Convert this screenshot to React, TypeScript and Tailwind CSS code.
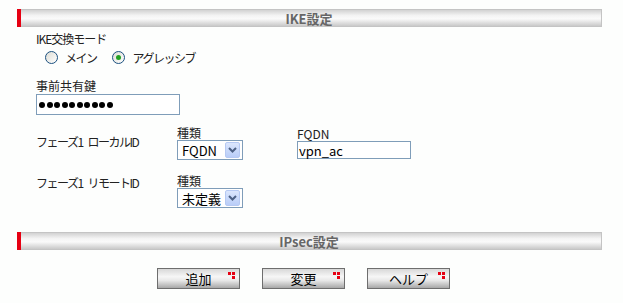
import React from "react"

const jp = "font-['Noto_Sans_CJK_JP','Noto_Sans',sans-serif]"

function SectionBar({ title }: { title: string }) {
    return (
        <div className="flex h-[18px] w-[585px] border border-[#c4c4c4] bg-[linear-gradient(to_bottom,#d2d2d2,#f4f4f4_35%,#fafafa_55%,#c9c9c9)]">
            <div className="w-[4px] -my-px -ml-px bg-[#e60012]" />
            <div className="flex-1 flex items-center justify-center text-[13px] font-bold leading-none text-[#666] pr-[4px]">
                {title}
            </div>
        </div>
    )
}

function Radio({ checked }: { checked?: boolean }) {
    return (
        <span className="flex h-[13px] w-[13px] items-center justify-center rounded-full border border-[#1c5180] bg-[linear-gradient(135deg,#dcdcd4,#ffffff)]">
            {checked && <span className="h-[5px] w-[5px] rounded-full bg-[#21a121]" />}
        </span>
    )
}

function Select({ value }: { value: string }) {
    return (
        <div className="flex h-[20px] w-[66px] items-center border border-[#7f9db9] bg-white pl-[4px] pr-[2px]">
            <span className="flex-1 text-[13px] leading-none text-black">{value}</span>
            <span className="flex h-[16px] w-[15px] items-center justify-center rounded-[2px] border border-[#b6c9f3] bg-[linear-gradient(to_bottom,#dbe6fd,#b9cdf8)]">
                <svg width="9" height="6" viewBox="0 0 9 6">
                    <path d="M1 1 L4.5 4.5 L8 1" fill="none" stroke="#4d6185" strokeWidth="2" />
                </svg>
            </span>
        </div>
    )
}

function Button({ label }: { label: string }) {
    return (
        <div className="relative flex h-[21px] w-[83px] items-center justify-center border border-[#6e6e6e] bg-[linear-gradient(to_bottom,#d8d8d8,#f6f6f6_40%,#e8e8e8_60%,#a8a8a8)] text-[13px] leading-none text-black">
            {label}
            <svg className="absolute right-[3px] top-[3px]" width="8" height="8" viewBox="0 0 8 8">
                <rect x="0" y="0" width="3" height="3" fill="#e60012" />
                <rect x="4" y="0" width="3" height="3" fill="#e60012" />
                <rect x="4" y="4" width="3" height="3" fill="#e60012" />
            </svg>
        </div>
    )
}

function PhaseLabel({ name, className }: { name: string; className: string }) {
    return (
        <div className={`flex w-[141px] text-[12px] leading-[14px] tracking-[-1.5px] ${className}`}>
            <span>フェーズ1</span>
            <span className="ml-[5px]">{name}</span>
        </div>
    )
}

export default function App() {
    return (
        <div className={`${jp} h-[303px] w-[623px] bg-[#fdfefd] pl-[17px] pt-[9px] text-[#222]`}>
            <SectionBar title="IKE設定" />

            <div className="pl-[19px]">
                {/* IKE exchange mode */}
                <div className="mt-[5px] text-[12px] leading-[14px] tracking-[-1px]">IKE交換モード</div>
                <div className="mt-[5px] flex items-center pl-[9px] text-[12px] leading-none tracking-[-1.5px]">
                    <Radio />
                    <span className="ml-[7px]">メイン</span>
                    <span className="ml-[15px]"><Radio checked /></span>
                    <span className="ml-[8px]">アグレッシブ</span>
                </div>

                {/* Pre-shared key */}
                <div className="mt-[14px] text-[12px] leading-[16px]">事前共有鍵</div>
                <div className="flex h-[21px] w-[144px] items-center gap-[1.5px] border border-[#7f9db9] bg-white pl-[2px]">
                    {Array.from({ length: 10 }).map((_, i) => (
                        <span key={i} className="h-[6px] w-[6px] rounded-full bg-black" />
                    ))}
                </div>

                {/* Phase 1 local ID */}
                <div className="mt-[11px] flex">
                    <PhaseLabel name="ローカルID" className="pt-[9px]" />
                    <div className="w-[120px]">
                        <div className="text-[12px] leading-[14px]">種類</div>
                        <Select value="FQDN" />
                    </div>
                    <div>
                        <div className="pt-px text-[12px] leading-[14px]">FQDN</div>
                        <div className="flex h-[18px] w-[114px] items-center border border-[#7f9db9] bg-white pl-[1px] text-[13px] leading-none text-black">
                            vpn_ac
                        </div>
                    </div>
                </div>

                {/* Phase 1 remote ID */}
                <div className="mt-[14px] flex">
                    <PhaseLabel name="リモートID" className="pt-[2px]" />
                    <div>
                        <div className="text-[12px] leading-[14px]">種類</div>
                        <Select value="未定義" />
                    </div>
                </div>
            </div>

            <div className="mt-[24px]">
                <SectionBar title="IPsec設定" />
            </div>

            <div className="mt-[18px] flex w-[585px] justify-center gap-[22px] pr-[12px]">
                <Button label="追加" />
                <Button label="変更" />
                <Button label="ヘルプ" />
            </div>
        </div>
    )
}
